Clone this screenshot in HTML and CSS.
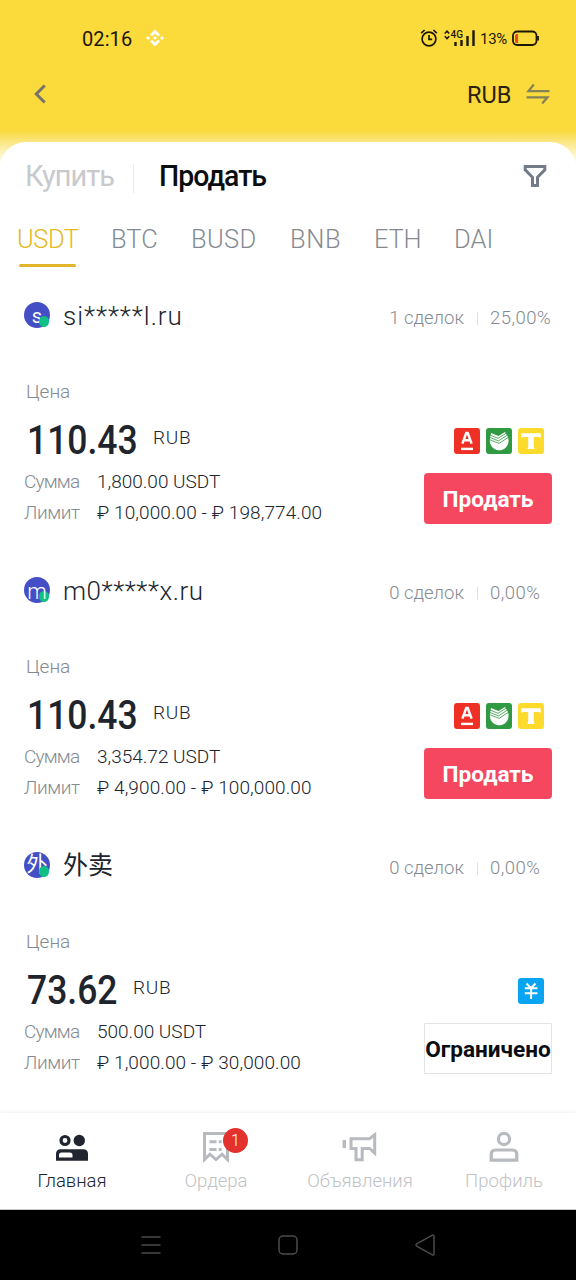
FILE: index.html
```html
<!DOCTYPE html>
<html lang="ru">
<head>
<meta charset="utf-8">
<title>P2P</title>
<link rel="stylesheet" href="styles.css">
</head>
<body>
<svg class="defs" width="0" height="0">
  <symbol id="alfa" viewBox="0 0 26 26"><rect width="26" height="26" rx="3" fill="#ee3124"/><path d="M8.400 15.600 12.300 4.900h1.400l3.900 10.700M9.800 12.200h6.400" fill="none" stroke="#fff" stroke-width="2.500"/><path d="M7 19.700h12v2.400H7z" fill="#fff"/></symbol>
  <symbol id="sber" viewBox="0 0 26 26"><rect width="26" height="26" rx="3" fill="#2f9a41"/><path d="M4.200 9.500c-1.600 5.200 1.500 12.800 8.800 12.800s11.600-7.500 8.600-14L19 3.900l-6.500 4L5 5z" fill="#fff"/><path d="M3.500 6.800 12 10.300 20.500 5M3 9.100l9.500 3.800L21.500 7M3 11.400l10 4 9.500-6.200" fill="none" stroke="#2f9a41" stroke-width=".8"/></symbol>
  <symbol id="tink" viewBox="0 0 26 26"><rect width="26" height="26" rx="3" fill="#fddb2d"/><path d="M3.300 5.300h19.400v4.400l-2.700-.6h-4.200v9.400l.9 2.500H9.300l.9-2.500V9.100H6l-2.700.6z" fill="#fff"/></symbol>
  <symbol id="yuan" viewBox="0 0 26 26"><rect width="26" height="26" rx="3" fill="#0aa5f2"/><path d="m8.500 5.500 4.500 4.600 4.500-4.600M6.800 10.300h12.600M6.800 15.300h12.600M13.100 10v11" fill="none" stroke="#fff" stroke-width="2"/></symbol>
</svg>
<div class="phone">
  <header class="top">
    <div class="status">
      <span class="time">02:16</span>
      <svg class="binance" width="18" height="18" viewBox="0 0 18 18" fill="#fff"><path d="M9 .5 14 5.500l-2 2-3-3-3 3-2-2zM9 17.500l5-5-2-2-3 3-3-3-2 2zM9 7l2 2-2 2-2-2zM2 7l2 2-2 2-2-2zM16 7l2 2-2 2-2-2z"/></svg>
      <span class="spacer"></span>
      <svg class="alarm" width="18" height="18" viewBox="0 0 18 18" fill="none" stroke="#1c1708" stroke-width="1.700"><circle cx="9" cy="10" r="6.900"/><path d="M9 6v4.300h3.200M1.200 4.200 4.600 1M16.800 4.200 13.400 1"/></svg>
      <svg class="signal" width="32" height="18" viewBox="0 0 32 18"><path d="M.8 4.500 3 2.200l2.200 2.300M.8 7.200 3 9.500l2.200-2.300" fill="none" stroke="#1c1708" stroke-width="1.600"/><text x="6.500" y="9" textLength="12.500" lengthAdjust="spacingAndGlyphs">4G</text><path d="M10.300 13h2.400v4h-2.400zM16.300 11h2.400v6h-2.400zM22.300 7h2.400v10h-2.400zM28.300 1.300h2.400V17h-2.400z" fill="#1c1708"/></svg>
      <span class="percent">13%</span>
      <svg class="battery" width="27" height="17" viewBox="0 0 27 17" fill="none"><rect x="1" y="1.500" width="23.500" height="13.500" rx="4.200" stroke="#1c1708" stroke-width="1.800"/><path d="M26 6v4.500" stroke="#1c1708" stroke-width="1.800"/><path d="M6 4v9H4.700Q3 13 3 11V6q0-2 1.700-2z" fill="#e8452a"/></svg>
    </div>
    <div class="bar">
      <svg width="14" height="20" viewBox="0 0 14 20" fill="none" stroke="#77736c" stroke-width="3"><path d="M11.700 1.500 3.300 10l8.400 8.500"/></svg>
      <span class="spacer"></span>
      <span class="fiat">RUB</span>
      <svg width="24" height="22" viewBox="0 0 24 22" fill="none" stroke="#858257" stroke-width="2.200"><path d="M23.500 8.100H2.500L7.800 1.500M.5 14.300h21L16.200 20.500"/></svg>
    </div>
  </header>
  <main class="sheet">
    <div class="modes">
      <span class="mode buy">Купить</span><i class="rule"></i><span class="mode sell">Продать</span>
      <svg width="24" height="24" viewBox="0 0 24 24" fill="none" stroke="#737a88" stroke-width="3"><path d="M2.200 2.500h19.600v3.300l-7.300 7.500v8.300h-5v-8.300L2.200 5.800z"/></svg>
    </div>
    <nav class="coins"><span class="coin on">USDT</span><span class="coin">BTC</span><span class="coin busd">BUSD</span><span class="coin bnb">BNB</span><span class="coin eth">ETH</span><span class="coin">DAI</span></nav>

    <article class="card">
      <div class="who"><span class="avatar"><b>s</b><i></i></span><span class="name loose">si<em>*****</em>l.ru</span><span class="deals">1 сделок</span><i class="bar-sep"></i><span class="rate">25,00%</span></div>
      <div class="body">
        <div class="info">
          <div class="label">Цена</div>
          <div class="price"><strong class="wide">110.43</strong><span>RUB</span></div>
          <div class="line"><span class="key sum">Сумма</span><span class="val">1,800.00 USDT</span></div>
          <div class="line"><span class="key">Лимит</span><span class="limit">₽ 10,000.00 - ₽ 198,774.00</span></div>
        </div>
        <div class="side">
          <div class="banks"><svg><use href="#alfa"/></svg><svg><use href="#sber"/></svg><svg><use href="#tink"/></svg></div>
          <button class="btn">Продать</button>
        </div>
      </div>
    </article>

    <article class="card">
      <div class="who"><span class="avatar"><b class="m">m</b><i></i></span><span class="name">m0<em>*****</em>x.ru</span><span class="deals">0 сделок</span><i class="bar-sep"></i><span class="rate">0,00%</span></div>
      <div class="body">
        <div class="info">
          <div class="label">Цена</div>
          <div class="price"><strong class="wide">110.43</strong><span>RUB</span></div>
          <div class="line"><span class="key sum">Сумма</span><span class="val">3,354.72 USDT</span></div>
          <div class="line"><span class="key">Лимит</span><span class="limit">₽ 4,900.00 - ₽ 100,000.00</span></div>
        </div>
        <div class="side">
          <div class="banks"><svg><use href="#alfa"/></svg><svg><use href="#sber"/></svg><svg><use href="#tink"/></svg></div>
          <button class="btn">Продать</button>
        </div>
      </div>
    </article>

    <article class="card">
      <div class="who"><span class="avatar"><b class="han">外</b><i></i></span><span class="name cjk">外卖</span><span class="deals">0 сделок</span><i class="bar-sep"></i><span class="rate">0,00%</span></div>
      <div class="body">
        <div class="info">
          <div class="label">Цена</div>
          <div class="price"><strong>73.62</strong><span>RUB</span></div>
          <div class="line"><span class="key sum">Сумма</span><span class="val">500.00 USDT</span></div>
          <div class="line"><span class="key">Лимит</span><span class="limit">₽ 1,000.00 - ₽ 30,000.00</span></div>
        </div>
        <div class="side">
          <div class="banks"><svg><use href="#yuan"/></svg></div>
          <button class="btn limited">Ограничено</button>
        </div>
      </div>
    </article>
  </main>
  <nav class="tabs">
    <div class="tab on">
      <svg width="34" height="34" viewBox="0 0 34 34"><circle cx="10" cy="10.500" r="4" fill="none" stroke="#202530" stroke-width="3.200"/><circle cx="24.300" cy="10.500" r="5.700" fill="#202530"/><path d="M1 30.700V24q0-4.800 4.800-4.800h22.400Q33 19.200 33 24v6.700z" fill="#202530"/><path d="M4 27.500V25q0-2.600 2.600-2.600h8.200q2.700 0 2.700 2.600v2.500z" fill="#fff"/></svg>
      <span>Главная</span>
    </div>
    <div class="tab">
      <svg width="34" height="34" viewBox="0 0 34 34" fill="none" stroke="#b7babe" stroke-width="3"><path d="M5.500 3.500h23v26l-5.500-5.300-6 5.300-6-5.300-5.500 5.300z"/><path d="M10.500 11.700h7M19.700 11.700h3M10.500 19.500h7M19.700 19.500h3"/></svg>
      <i class="badge">1</i>
      <span class="orders">Ордера</span>
    </div>
    <div class="tab">
      <svg width="36" height="34" viewBox="0 0 36 34" fill="none" stroke="#b7babe" stroke-width="3"><path d="M2.300 10v8" stroke-width="3.400"/><path d="M9 8.800h18.500l5.200-4v18.400l-5.200-4.700h-7.300v11.300h-6.200V18.500H9z"/></svg>
      <span class="ads">Объявления</span>
    </div>
    <div class="tab">
      <svg width="34" height="34" viewBox="0 0 34 34" fill="none" stroke="#b7babe" stroke-width="3.200"><circle cx="17" cy="9" r="5.600"/><path d="M4.200 30.200v-5.700q0-4.500 4.500-4.500h16.600q4.500 0 4.500 4.500v5.700z"/></svg>
      <span class="profile">Профиль</span>
    </div>
  </nav>
  <footer class="system">
    <svg width="20" height="20" viewBox="0 0 20 20" fill="none" stroke="#4b4b4b" stroke-width="1.500"><path d="M.5 2h19M.5 10h19M.5 18h19"/></svg>
    <svg width="20" height="20" viewBox="0 0 20 20" fill="none" stroke="#4b4b4b" stroke-width="1.500"><rect x="1" y="1" width="18" height="18" rx="4"/></svg>
    <svg width="20" height="22" viewBox="0 0 20 22" fill="none" stroke="#4b4b4b" stroke-width="1.500" stroke-linejoin="round"><path d="M17 1.300q2-.8 2 1v17.400q0 1.800-2 1L2 12.300q-2-1.300 0-2.600z"/></svg>
  </footer>
</div>
</body>
</html>
```

FILE: styles.css
```css
* { box-sizing: border-box; }
body { margin: 0; background: #fff; font-family: Roboto, "Noto Sans CJK SC", sans-serif; font-weight: 300; color: #20242c; }
i, em { font-style: normal; }
svg { display: block; flex: none; }
.defs { position: absolute; }
.phone { width: 576px; height: 1280px; display: flex; flex-direction: column; overflow: hidden; white-space: nowrap;
  background: linear-gradient(#fbda3c 0 130px, #fae063 137px, #fbe785 142px, #fff 165px); }
.spacer { flex: 1; }
.top { height: 142px; flex: none; }
.status { height: 76px; padding: 0 37px 0 82px; display: flex; align-items: center; font-weight: 400; color: #1c1708; }
.time { width: 64px; padding-top: 1px; font-size: 20px; letter-spacing: .1px; }
.alarm { margin-right: 6px; }
.signal text { font: 500 11px Roboto, sans-serif; fill: #1c1708; }
.percent { width: 32px; margin-left: 4px; padding-top: 1px; font-size: 15px; letter-spacing: -.3px; }
.bar { height: 36px; padding: 0 26px 0 33px; display: flex; align-items: center; }
.fiat { padding-top: 1px; font-size: 23.500px; font-weight: 400; width: 59px; color: #2b220b; }
.sheet { height: 971px; flex: none; border-radius: 26px 26px 0 0; background: #fff; }
.modes { height: 67px; padding: 0 29px 0 25px; display: flex; align-items: center; }
.modes svg { margin-left: auto; }
.mode { font-size: 30px; font-weight: 400; line-height: 67px; transform-origin: left; }
.buy { width: 108px; color: #c7c9cc; letter-spacing: -1px; transform: scaleX(.965); }
.rule { width: 1px; height: 29px; background: #e9eaec; margin: 5px 25px 0 0; }
.sell { font-weight: 500; color: #0b0e11; letter-spacing: -1px; transform: scaleX(.947); }
.coins { height: 58px; padding: 5px 0 0 18px; display: grid; grid-template-columns: 93px 80px 99px 84px 80px 60px; font-size: 25.500px; line-height: 50px; color: #858a92; }
.coin { height: 53px; }
.coin.on { position: relative; width: 58px; color: #e6b823; text-indent: -1px; letter-spacing: -.5px; }
.coin.on::after { content: ""; position: absolute; left: 1px; right: 0; bottom: 0; height: 3.500px; border-radius: 2px; background: #e3b52a; }
.busd { letter-spacing: .3px; }
.bnb { letter-spacing: .6px; }
.eth { letter-spacing: -.3px; }
.card { height: 275.200px; padding: 33px 24px 0; }
.who { height: 34px; display: flex; align-items: center; }
.avatar { position: relative; width: 26px; height: 26px; margin: -4px 13px 0 0; border-radius: 50%; background: #454fc5; color: #fff; text-align: center; }
.avatar b { display: block; font-size: 20px; font-weight: 400; line-height: 29px; }
.avatar b.m { position: relative; z-index: 1; font-size: 22px; font-weight: 300; }
.avatar b.han { font-size: 21px; line-height: 24px; }
.avatar i { position: absolute; left: 15px; top: 14px; width: 10px; height: 11px; border-radius: 50%; background: #0fc184; }
.name { flex: 1; font-size: 26px; line-height: 32px; padding-bottom: 2px; letter-spacing: .55px; }
.name.loose { letter-spacing: .95px; }
.name.cjk { font-size: 25px; font-weight: 400; letter-spacing: 0; }
.deals, .rate { font-size: 18.500px; line-height: 34px; padding-top: 1px; color: #858a92; }
.bar-sep { width: 1px; height: 13px; margin: 2px 12px 0 13px; background: #dfe1e4; }
.rate { width: 62px; letter-spacing: .5px; }
.body { display: flex; justify-content: space-between; padding-top: 42px; }
.label { height: 32px; padding-left: 2px; font-size: 19px; line-height: 31px; color: #858a92; }
.price { height: 59px; padding-left: 3px; display: flex; }
.price strong { width: 106px; font-size: 41px; font-weight: 500; line-height: 64px; transform: scaleX(.865); transform-origin: left; }
.price .wide { width: 126px; }
.price span { font-size: 19px; line-height: 59px; letter-spacing: .7px; }
.line { height: 30.500px; display: flex; font-size: 19px; line-height: 30px; }
.key { width: 73px; color: #858a92; letter-spacing: -.4px; }
.key.sum { letter-spacing: -.8px; }
.limit { letter-spacing: .09px; }
.side { width: 128px; padding-top: 52px; }
.banks { display: flex; justify-content: flex-end; gap: 6px; padding-right: 8px; margin-bottom: 19px; }
.banks svg { width: 26px; height: 26px; }
.btn { display: block; width: 128px; height: 51px; padding: 0; border: 0; border-radius: 4px; background: #f5475f; color: #fff; font: 700 22.600px/53px Roboto, sans-serif; }
.limited { border: 1px solid #e3e4e6; border-radius: 1px; background: #fff; color: #0b0e11; line-height: 51px; }
.tabs { height: 97px; flex: none; display: grid; grid-template-columns: repeat(4, 144px); background: #fff; border-bottom: 1px solid #c8c8c8; box-shadow: 0 -1px 4px #00000010; z-index: 1; }
.tab { position: relative; display: flex; flex-direction: column; align-items: center; padding-top: 17px; font-size: 18.500px; line-height: 34px; color: #bfc2c6; }
.tab.on { color: #20242c; }
.badge { position: absolute; left: 79px; top: 15px; width: 25px; height: 25px; border-radius: 50%; background: #e3312d; color: #fff; font-size: 16px; line-height: 25px; text-align: center; z-index: 1; }
.system { flex: 1; background: #000; display: flex; align-items: center; padding: 0 141px; justify-content: space-between; }
```
